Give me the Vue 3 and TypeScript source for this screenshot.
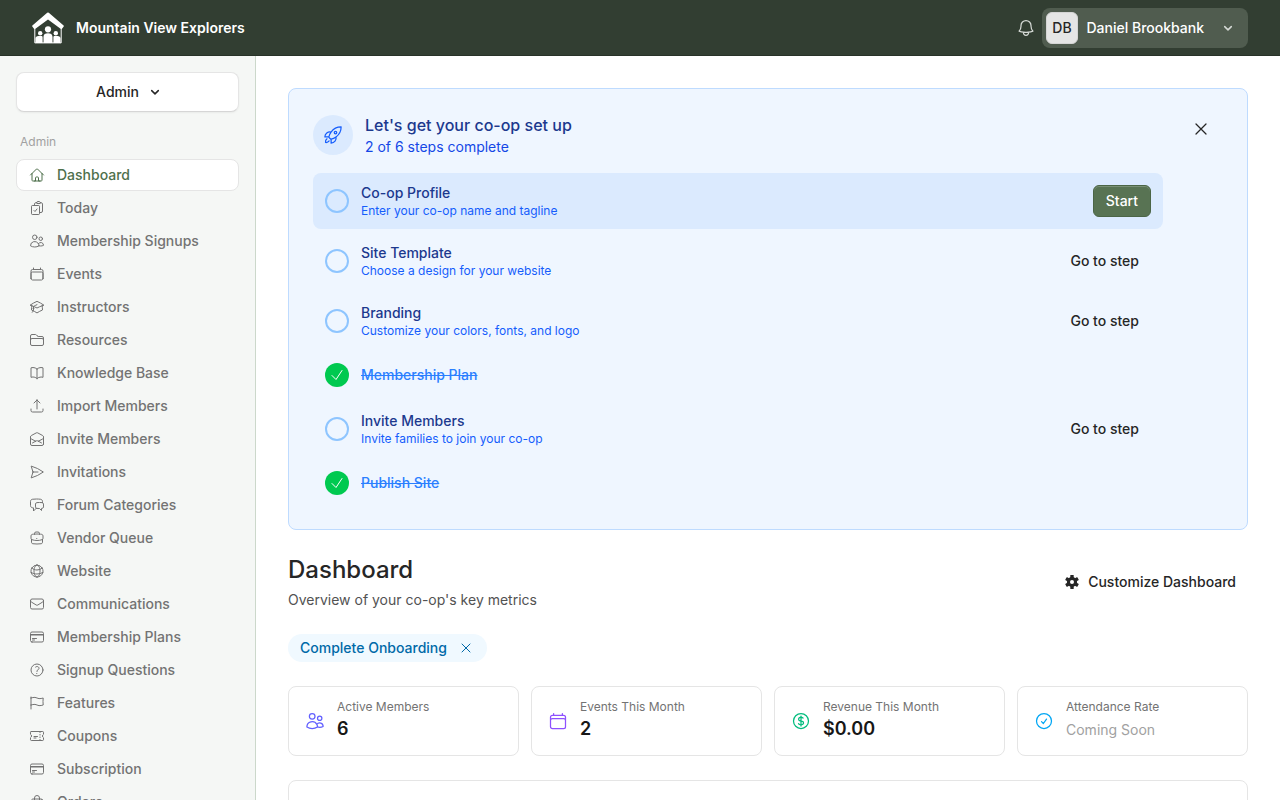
<script setup lang="ts">
import { computed } from 'vue'

interface NavItem {
  label: string
  icon: string
  active?: boolean
}

interface Step {
  title: string
  text?: string
  done?: boolean
  current?: boolean
}

interface Stat {
  label: string
  value: string
  icon: string
  tone: string
  muted?: boolean
}

const icons: Record<string, string> = {
  home: 'm2.25 12 8.954-8.955c.44-.439 1.152-.439 1.591 0L21.75 12M4.5 9.75v10.125c0 .621.504 1.125 1.125 1.125H9.75v-4.875c0-.621.504-1.125 1.125-1.125h2.25c.621 0 1.125.504 1.125 1.125V21h4.125c.621 0 1.125-.504 1.125-1.125V9.75M8.25 21h8.25',
  clipboard:
    'M11.35 3.836c-.065.21-.1.433-.1.664 0 .414.336.75.75.75h4.5a.75.75 0 0 0 .75-.75 2.25 2.25 0 0 0-.1-.664m-5.8 0A2.251 2.251 0 0 1 13.5 2.25H15c1.012 0 1.867.668 2.15 1.586m-5.8 0c-.376.023-.75.05-1.124.08C9.095 4.01 8.25 4.973 8.25 6.108V8.25m8.9-4.414c.376.023.75.05 1.124.08 1.131.094 1.976 1.057 1.976 2.192V16.5A2.25 2.25 0 0 1 18 18.75h-2.25m-7.5-10.5H4.875c-.621 0-1.125.504-1.125 1.125v11.25c0 .621.504 1.125 1.125 1.125h9.75c.621 0 1.125-.504 1.125-1.125V18.75m-7.5-10.5h6.375c.621 0 1.125.504 1.125 1.125v9.375m-8.25-3 1.5 1.5 3-3.75',
  users:
    'M15 19.128a9.38 9.38 0 0 0 2.625.372 9.337 9.337 0 0 0 4.121-.952 4.125 4.125 0 0 0-7.533-2.493M15 19.128v-.003c0-1.113-.285-2.16-.786-3.07M15 19.128v.106A12.318 12.318 0 0 1 8.624 21c-2.331 0-4.512-.645-6.374-1.766l-.001-.109a6.375 6.375 0 0 1 11.964-3.07M12 6.375a3.375 3.375 0 1 1-6.75 0 3.375 3.375 0 0 1 6.75 0Zm8.25 2.25a2.625 2.625 0 1 1-5.25 0 2.625 2.625 0 0 1 5.25 0Z',
  calendar:
    'M6.75 3v2.25M17.25 3v2.25M3 18.75V7.5a2.25 2.25 0 0 1 2.25-2.25h13.5A2.25 2.25 0 0 1 21 7.5v11.25m-18 0A2.25 2.25 0 0 0 5.25 21h13.5A2.25 2.25 0 0 0 21 18.75m-18 0v-7.5A2.25 2.25 0 0 1 5.25 9h13.5A2.25 2.25 0 0 1 21 11.25v7.5',
  cap: 'M4.26 10.147a60.438 60.438 0 0 0-.491 6.347A48.62 48.62 0 0 1 12 20.904a48.62 48.62 0 0 1 8.232-4.41 60.46 60.46 0 0 0-.491-6.347m-15.482 0a50.636 50.636 0 0 0-2.658-.813A59.906 59.906 0 0 1 12 3.493a59.903 59.903 0 0 1 10.399 5.84c-.896.248-1.783.52-2.658.814m-15.482 0A50.717 50.717 0 0 1 12 13.489a50.702 50.702 0 0 1 7.74-3.342M6.75 15a.75.75 0 1 0 0-1.5.75.75 0 0 0 0 1.5Zm0 0v-3.675A55.378 55.378 0 0 1 12 8.443m-7.007 11.55A5.981 5.981 0 0 0 6.75 15.75v-1.5',
  folder:
    'M2.25 12.75V12A2.25 2.25 0 0 1 4.5 9.75h15A2.25 2.25 0 0 1 21.75 12v.75m-8.69-6.44-2.12-2.12a1.5 1.5 0 0 0-1.061-.44H4.5A2.25 2.25 0 0 0 2.25 6v12a2.25 2.25 0 0 0 2.25 2.25h15A2.25 2.25 0 0 0 21.75 18V9a2.25 2.25 0 0 0-2.25-2.25h-5.379a1.5 1.5 0 0 1-1.06-.44Z',
  book: 'M12 6.042A8.967 8.967 0 0 0 6 3.75c-1.052 0-2.062.18-3 .512v14.25A8.987 8.987 0 0 1 6 18c2.305 0 4.408.867 6 2.292m0-14.25a8.966 8.966 0 0 1 6-2.292c1.052 0 2.062.18 3 .512v14.25A8.987 8.987 0 0 0 18 18a8.967 8.967 0 0 0-6 2.292m0-14.25v14.25',
  upload: 'M3 16.5v2.25A2.25 2.25 0 0 0 5.25 21h13.5A2.25 2.25 0 0 0 21 18.75V16.5m-13.5-9L12 3m0 0 4.5 4.5M12 3v13.5',
  mailopen:
    'M21.75 9v.906a2.25 2.25 0 0 1-1.183 1.981l-6.478 3.488M2.25 9v.906a2.25 2.25 0 0 0 1.183 1.981l6.478 3.488m8.839 2.51-4.66-2.51m0 0-1.023-.55a2.25 2.25 0 0 0-2.134 0l-1.022.55m0 0-4.661 2.51m16.5 1.615a2.25 2.25 0 0 1-2.25 2.25h-15a2.25 2.25 0 0 1-2.25-2.25V8.844a2.25 2.25 0 0 1 1.183-1.981l7.5-4.039a2.25 2.25 0 0 1 2.134 0l7.5 4.039a2.25 2.25 0 0 1 1.183 1.98V19.5Z',
  send: 'M6 12 3.269 3.125A59.769 59.769 0 0 1 21.485 12 59.768 59.768 0 0 1 3.27 20.875L5.999 12Zm0 0h7.5',
  chat: 'M20.25 8.511c.884.284 1.5 1.128 1.5 2.097v4.286c0 1.136-.847 2.1-1.98 2.193-.34.027-.68.052-1.02.072v3.091l-3-3c-1.354 0-2.694-.055-4.02-.163a2.115 2.115 0 0 1-.825-.242m9.345-8.334a2.126 2.126 0 0 0-.476-.095 48.64 48.64 0 0 0-8.048 0c-1.131.094-1.976 1.057-1.976 2.192v4.286c0 .837.46 1.58 1.155 1.951m9.345-8.334V6.637c0-1.621-1.152-3.026-2.76-3.235A48.455 48.455 0 0 0 11.25 3c-2.115 0-4.198.137-6.24.402-1.608.209-2.76 1.614-2.76 3.235v6.226c0 1.621 1.152 3.026 2.76 3.235.577.075 1.157.14 1.74.194V21l4.155-4.155',
  briefcase:
    'M20.25 14.15v4.25c0 1.094-.787 2.036-1.872 2.18-2.087.277-4.216.42-6.378.42s-4.291-.143-6.378-.42c-1.085-.144-1.872-1.086-1.872-2.18v-4.25m16.5 0a2.18 2.18 0 0 0 .75-1.661V8.706c0-1.081-.768-2.015-1.837-2.175a48.114 48.114 0 0 0-3.413-.387m4.5 8.006c-.194.165-.42.295-.673.38A23.978 23.978 0 0 1 12 15.75c-2.648 0-5.195-.429-7.577-1.22a2.016 2.016 0 0 1-.673-.38m0 0A2.18 2.18 0 0 1 3 12.489V8.706c0-1.081.768-2.015 1.837-2.175a48.111 48.111 0 0 1 3.413-.387m7.5 0V5.25A2.25 2.25 0 0 0 13.5 3h-3a2.25 2.25 0 0 0-2.25 2.25v.894m7.5 0a48.667 48.667 0 0 0-7.5 0M12 12.75h.008v.008H12v-.008Z',
  globe:
    'M12 21a9.004 9.004 0 0 0 8.716-6.747M12 21a9.004 9.004 0 0 1-8.716-6.747M12 21c2.485 0 4.5-4.03 4.5-9S14.485 3 12 3m0 18c-2.485 0-4.5-4.03-4.5-9S9.515 3 12 3m0 0a8.997 8.997 0 0 1 7.843 4.582M12 3a8.997 8.997 0 0 0-7.843 4.582m15.686 0A11.953 11.953 0 0 1 12 10.5c-2.998 0-5.74-1.1-7.843-2.918m15.686 0A8.959 8.959 0 0 1 21 12c0 .778-.099 1.533-.284 2.253m0 0A17.919 17.919 0 0 1 12 16.5c-3.162 0-6.133-.815-8.716-2.247m0 0A9.015 9.015 0 0 1 3 12c0-1.605.42-3.113 1.157-4.418',
  mail: 'M21.75 6.75v10.5a2.25 2.25 0 0 1-2.25 2.25h-15a2.25 2.25 0 0 1-2.25-2.25V6.75m19.5 0A2.25 2.25 0 0 0 19.5 4.5h-15a2.25 2.25 0 0 0-2.25 2.25m19.5 0v.243a2.25 2.25 0 0 1-1.07 1.916l-7.5 4.615a2.25 2.25 0 0 1-2.36 0L3.32 8.91a2.25 2.25 0 0 1-1.07-1.916V6.75',
  card: 'M2.25 8.25h19.5M2.25 9h19.5m-16.5 5.25h6m-6 2.25h3m-3.75 3h15a2.25 2.25 0 0 0 2.25-2.25V6.75A2.25 2.25 0 0 0 19.5 4.5h-15a2.25 2.25 0 0 0-2.25 2.25v10.5A2.25 2.25 0 0 0 4.5 19.5Z',
  question:
    'M9.879 7.519c1.171-1.025 3.071-1.025 4.242 0 1.172 1.025 1.172 2.687 0 3.712-.203.179-.43.326-.67.442-.745.361-1.45.999-1.45 1.827v.75M21 12a9 9 0 1 1-18 0 9 9 0 0 1 18 0Zm-9 5.25h.008v.008H12v-.008Z',
  flag: 'M3 3v1.5M3 21v-6m0 0 2.77-.693a9 9 0 0 1 6.208.682l.108.054a9 9 0 0 0 6.086.71l3.114-.732a48.524 48.524 0 0 1-.005-10.499l-3.11.732a9 9 0 0 1-6.085-.711l-.108-.054a9 9 0 0 0-6.208-.682L3 4.5M3 15V4.5',
  ticket:
    'M16.5 6v.75m0 3v.75m0 3v.75m0 3V18m-9-5.25h5.25M7.5 15h3M3.375 5.25c-.621 0-1.125.504-1.125 1.125v3.026a2.999 2.999 0 0 1 0 5.198v3.026c0 .621.504 1.125 1.125 1.125h17.25c.621 0 1.125-.504 1.125-1.125v-3.026a2.999 2.999 0 0 1 0-5.198V6.375c0-.621-.504-1.125-1.125-1.125H3.375Z',
  bag: 'M15.75 10.5V6a3.75 3.75 0 1 0-7.5 0v4.5m11.356-1.993 1.263 12c.07.665-.45 1.243-1.119 1.243H4.25a1.125 1.125 0 0 1-1.12-1.243l1.264-12A1.125 1.125 0 0 1 5.513 7.5h12.974c.576 0 1.059.435 1.119 1.007Z',
  bell: 'M14.857 17.082a23.848 23.848 0 0 0 5.454-1.31A8.967 8.967 0 0 1 18 9.75V9A6 6 0 0 0 6 9v.75a8.967 8.967 0 0 1-2.312 6.022c1.733.64 3.56 1.085 5.455 1.31m5.714 0a24.255 24.255 0 0 1-5.714 0m5.714 0a3 3 0 1 1-5.714 0',
  rocket:
    'M15.59 14.37a6 6 0 0 1-5.84 7.38v-4.8m5.84-2.58a14.98 14.98 0 0 0 6.16-12.12A14.98 14.98 0 0 0 9.631 8.41m5.96 5.96a14.926 14.926 0 0 1-5.841 2.58m-.119-8.54a6 6 0 0 0-7.381 5.84h4.8m2.581-5.84a14.927 14.927 0 0 0-2.58 5.84m2.699 2.7c-.103.021-.207.041-.311.06a15.09 15.09 0 0 1-2.448-2.448 14.9 14.9 0 0 1 .06-.312m-2.24 2.39a4.493 4.493 0 0 0-1.757 4.306 4.493 4.493 0 0 0 4.306-1.758M16.5 9a1.5 1.5 0 1 1-3 0 1.5 1.5 0 0 1 3 0Z',
  dollar:
    'M12 6v12m-3-2.818.879.659c1.171.879 3.07.879 4.242 0 1.172-.879 1.172-2.303 0-3.182C13.536 12.219 12.768 12 12 12c-.725 0-1.45-.22-2.003-.659-1.106-.879-1.106-2.303 0-3.182s2.9-.879 4.006 0l.415.33M21 12a9 9 0 1 1-18 0 9 9 0 0 1 18 0Z',
  checkCircle: 'M9 12.75 11.25 15 15 9.75M21 12a9 9 0 1 1-18 0 9 9 0 0 1 18 0Z',
  check: 'm4.5 12.75 6 6 9-13.5',
  close: 'M6 18 18 6M6 6l12 12',
}

const nav: NavItem[] = [
  { label: 'Dashboard', icon: 'home', active: true },
  { label: 'Today', icon: 'clipboard' },
  { label: 'Membership Signups', icon: 'users' },
  { label: 'Events', icon: 'calendar' },
  { label: 'Instructors', icon: 'cap' },
  { label: 'Resources', icon: 'folder' },
  { label: 'Knowledge Base', icon: 'book' },
  { label: 'Import Members', icon: 'upload' },
  { label: 'Invite Members', icon: 'mailopen' },
  { label: 'Invitations', icon: 'send' },
  { label: 'Forum Categories', icon: 'chat' },
  { label: 'Vendor Queue', icon: 'briefcase' },
  { label: 'Website', icon: 'globe' },
  { label: 'Communications', icon: 'mail' },
  { label: 'Membership Plans', icon: 'card' },
  { label: 'Signup Questions', icon: 'question' },
  { label: 'Features', icon: 'flag' },
  { label: 'Coupons', icon: 'ticket' },
  { label: 'Subscription', icon: 'card' },
  { label: 'Orders', icon: 'bag' },
]

const steps: Step[] = [
  { title: 'Co-op Profile', text: 'Enter your co-op name and tagline', current: true },
  { title: 'Site Template', text: 'Choose a design for your website' },
  { title: 'Branding', text: 'Customize your colors, fonts, and logo' },
  { title: 'Membership Plan', done: true },
  { title: 'Invite Members', text: 'Invite families to join your co-op' },
  { title: 'Publish Site', done: true },
]

const doneCount = computed(() => steps.filter((s) => s.done).length)

const stats: Stat[] = [
  { label: 'Active Members', value: '6', icon: 'users', tone: 'indigo' },
  { label: 'Events This Month', value: '2', icon: 'calendar', tone: 'violet' },
  { label: 'Revenue This Month', value: '$0.00', icon: 'dollar', tone: 'emerald' },
  { label: 'Attendance Rate', value: 'Coming Soon', icon: 'checkCircle', tone: 'sky', muted: true },
]
</script>

<template>
  <div class="app">
    <header class="topbar">
      <div class="brand">
        <svg class="logo" viewBox="0 0 32 32">
          <path class="solid" d="M15.200.8a1.200 1.200 0 0 1 1.600 0L31.600 13.400c.4.300.4.700.1 1.100l-1.700 2.300c-.3.400-.7.400-1.100.1L16 7.400 3.100 16.900c-.4.300-.8.300-1.100-.1L.3 14.500c-.3-.4-.3-.8.1-1.100Z" />
          <path class="wall" d="M2.800 16.500V30.900H29.200V16.500" />
          <circle class="solid" cx="16" cy="17.300" r="3.100" />
          <circle class="solid" cx="8.200" cy="21.200" r="2.200" />
          <circle class="solid" cx="23.800" cy="21.200" r="2.200" />
          <path class="solid" d="M11.500 31v-6.300c0-2.400 1.800-3.500 4.500-3.500s4.500 1.100 4.500 3.500V31ZM3.400 31v-4.500c0-1.600 1.300-2.500 3-2.500h3c.7 0 1.200.4 1.200 1.200V31ZM28.600 31v-4.500c0-1.600-1.300-2.500-3-2.500h-3c-.7 0-1.200.4-1.200 1.200V31Z" />
        </svg>
        <span>Mountain View Explorers</span>
      </div>
      <div class="account">
        <svg class="icon bell" viewBox="0 0 24 24"><path :d="icons.bell" /></svg>
        <button class="profile">
          <span class="avatar">DB</span>
          <span class="who">Daniel Brookbank</span>
          <svg class="chevron" viewBox="0 0 16 16"><path d="M4.700 6.600 8 9.900l3.300-3.300" /></svg>
        </button>
      </div>
    </header>

    <div class="body">
      <aside class="sidebar">
        <button class="switcher">
          Admin
          <svg class="chevron" viewBox="0 0 16 16"><path d="M4.700 6.600 8 9.900l3.300-3.300" /></svg>
        </button>
        <div class="group">Admin</div>
        <nav class="nav">
          <a v-for="item in nav" :key="item.label" class="nav-item" :class="{ active: item.active }">
            <svg class="icon small" viewBox="0 0 24 24"><path :d="icons[item.icon]" /></svg>
            <span>{{ item.label }}</span>
          </a>
        </nav>
      </aside>

      <main class="main">
        <section class="setup">
          <div class="setup-body">
            <div class="setup-head">
              <span class="rocket"><svg class="icon" viewBox="0 0 24 24"><path :d="icons.rocket" /></svg></span>
              <div>
                <h2>Let's get your co-op set up</h2>
                <p>{{ doneCount }} of {{ steps.length }} steps complete</p>
              </div>
            </div>
            <ul class="steps">
              <li v-for="step in steps" :key="step.title" class="step" :class="{ current: step.current, done: step.done }">
                <span class="mark">
                  <svg v-if="step.done" class="icon small" viewBox="0 0 24 24"><path :d="icons.check" /></svg>
                </span>
                <div class="step-text">
                  <div class="step-title"><span>{{ step.title }}</span></div>
                  <div v-if="step.text" class="step-desc">{{ step.text }}</div>
                </div>
                <button v-if="step.current" class="btn primary">Start</button>
                <button v-else-if="!step.done" class="btn ghost">Go to step</button>
              </li>
            </ul>
          </div>
          <button class="close" aria-label="Close">
            <svg class="icon" viewBox="0 0 24 24"><path :d="icons.close" /></svg>
          </button>
        </section>

        <div class="page-head">
          <div>
            <h1>Dashboard</h1>
            <p>Overview of your co-op's key metrics</p>
          </div>
          <button class="customize">
            <svg class="gear" viewBox="0 0 16 16">
              <circle cx="8" cy="8" r="5.100" />
              <rect x="6.300" y="1" width="3.400" height="14" rx=".6" />
              <rect x="6.300" y="1" width="3.400" height="14" rx=".6" transform="rotate(60 8 8)" />
              <rect x="6.300" y="1" width="3.400" height="14" rx=".6" transform="rotate(120 8 8)" />
              <circle class="hole" cx="8" cy="8" r="2" />
            </svg>
            Customize Dashboard
          </button>
        </div>

        <div class="chip">
          Complete Onboarding
          <svg class="icon small" viewBox="0 0 24 24"><path :d="icons.close" /></svg>
        </div>

        <div class="stats">
          <div v-for="stat in stats" :key="stat.label" class="stat">
            <svg class="icon" :class="stat.tone" viewBox="0 0 24 24"><path :d="icons[stat.icon]" /></svg>
            <div>
              <div class="stat-label">{{ stat.label }}</div>
              <div class="stat-value" :class="{ muted: stat.muted }">{{ stat.value }}</div>
            </div>
          </div>
        </div>

        <section class="panel"></section>
      </main>
    </div>
  </div>
</template>

<style>
body {
  margin: 0;
  overflow: hidden;
}
</style>

<style scoped>
.app {
  height: 800px;
  display: flex;
  flex-direction: column;
  overflow: hidden;
  background: #fff;
  color: #262626;
  font-family: Inter, sans-serif;
  font-size: 14px;
  line-height: 20px;
}
.app * {
  box-sizing: border-box;
}
button {
  font: inherit;
  font-weight: 500;
  color: inherit;
  border: 0;
  background: none;
  padding: 0;
  margin: 0;
}
h1,
h2,
p,
ul {
  margin: 0;
  padding: 0;
  font-weight: 400;
  list-style: none;
}
svg {
  display: block;
  flex: none;
}
.icon {
  width: 20px;
  height: 20px;
  fill: none;
  stroke: currentColor;
  stroke-width: 1.5;
  stroke-linecap: round;
  stroke-linejoin: round;
}
.icon.small {
  width: 16px;
  height: 16px;
}
.chevron {
  width: 16px;
  height: 16px;
  fill: none;
  stroke: currentColor;
  stroke-width: 1.5;
  stroke-linecap: round;
  stroke-linejoin: round;
}

.topbar {
  flex: none;
  height: 56px;
  padding: 0 32px;
  display: flex;
  align-items: center;
  justify-content: space-between;
  background: #323e32;
  border-bottom: 1px solid #283228;
  color: #fff;
}
.brand {
  display: flex;
  align-items: center;
  gap: 12px;
  font-weight: 600;
}
.logo {
  width: 32px;
  height: 32px;
}
.solid {
  fill: #fff;
}
.wall {
  fill: none;
  stroke: #fff;
  stroke-width: 1;
}
.account {
  display: flex;
  align-items: center;
  gap: 6px;
}
.bell {
  color: #d5d9d5;
}
.profile {
  width: 206px;
  height: 40px;
  padding: 4px;
  display: flex;
  align-items: center;
  border-radius: 8px;
  background: #505c4f;
}
.avatar {
  width: 32px;
  height: 32px;
  border-radius: 6px;
  background: #e5e5e5;
  border: 1px solid #d5d5d5;
  color: #262626;
  line-height: 30px;
  text-align: center;
}
.who {
  flex: 1;
  padding-left: 8.5px;
  text-align: left;
  font-weight: 500;
}
.profile .chevron {
  margin-right: 8px;
  color: #d5d9d5;
}

.body {
  flex: 1;
  min-height: 0;
  display: flex;
}
.sidebar {
  width: 256px;
  flex: none;
  padding: 16px;
  background: #f5f7f5;
  border-right: 1px solid #ccd8cb;
  overflow: hidden;
}
.switcher {
  width: 100%;
  height: 40px;
  padding-left: 4px;
  display: flex;
  align-items: center;
  justify-content: center;
  gap: 8px;
  background: #fff;
  border: 1px solid #e5e5e5;
  border-bottom-color: #d6d6d6;
  border-radius: 8px;
  box-shadow: 0 1px 2px rgba(0, 0, 0, 0.05);
}
.group {
  padding: 20px 4px 7px;
  color: #a1a1a1;
  font-size: 12px;
}
.nav {
  display: flex;
  flex-direction: column;
  gap: 1px;
}
.nav-item {
  height: 32px;
  flex: none;
  padding: 0 12px;
  display: flex;
  align-items: center;
  gap: 12px;
  border: 1px solid transparent;
  border-radius: 8px;
  color: #737373;
  font-weight: 500;
}
.nav-item.active {
  background: #fff;
  border-color: #e5e5e5;
  color: #4f704c;
}

.main {
  flex: 1;
  min-width: 0;
  padding: 32px 32px 0;
  overflow: hidden;
}
.setup {
  display: flex;
  gap: 16px;
  align-items: flex-start;
  padding: 24px;
  background: #eff6ff;
  border: 1px solid #bedbff;
  border-radius: 8px;
}
.setup-body {
  flex: 1;
}
.setup-head {
  height: 44px;
  display: flex;
  align-items: center;
  gap: 12px;
}
.setup-head h2 {
  font-size: 16px;
  line-height: 24px;
  font-weight: 500;
  color: #1c398e;
}
.setup-head p {
  color: #1447e6;
}
.rocket {
  width: 40px;
  height: 40px;
  display: grid;
  place-items: center;
  border-radius: 50%;
  background: #dbeafe;
  color: #155dfc;
}
.steps {
  margin-top: 16px;
  display: flex;
  flex-direction: column;
  gap: 4px;
}
.step {
  min-height: 44px;
  padding: 10px 12px;
  display: flex;
  align-items: center;
  gap: 12px;
  border-radius: 8px;
}
.step.current {
  background: #dbeafe;
}
.mark {
  width: 24px;
  height: 24px;
  flex: none;
  display: grid;
  place-items: center;
  border: 2px solid #8ec5ff;
  border-radius: 50%;
}
.done .mark {
  border: 0;
  background: #00c950;
  color: #fff;
}
.step-text {
  flex: 1;
}
.step-title {
  font-weight: 500;
  color: #1c398e;
}
.done .step-title {
  color: #2b7fff;
  text-decoration: line-through;
}
.step-desc {
  font-size: 12px;
  line-height: 16px;
  color: #155dfc;
}
.btn {
  height: 32px;
  padding: 0 12px;
  border-radius: 6px;
}
.btn.primary {
  color: #fff;
  background: #587353;
  border: 1px solid #4b6546;
  box-shadow: inset 0 1px rgba(255, 255, 255, 0.2);
}
.close {
  width: 44px;
  height: 32px;
  display: grid;
  place-items: center;
}

.page-head {
  margin-top: 24px;
  height: 56px;
  display: flex;
  align-items: center;
  justify-content: space-between;
}
.page-head h1 {
  font-size: 24px;
  line-height: 32px;
  font-weight: 500;
}
.page-head p {
  margin-top: 4px;
  color: #525252;
}
.customize {
  height: 40px;
  padding: 0 12px;
  display: flex;
  align-items: center;
  gap: 8px;
}
.gear {
  width: 16px;
  height: 16px;
  fill: #262626;
}
.gear .hole {
  fill: #fff;
}
.chip {
  width: fit-content;
  height: 28px;
  margin-top: 24px;
  padding: 0 13px 0 12px;
  display: flex;
  align-items: center;
  gap: 11px;
  border-radius: 14px;
  background: #f0f9ff;
  color: #0069a8;
  font-weight: 500;
}
.stats {
  margin-top: 24px;
  display: grid;
  grid-template-columns: repeat(4, 1fr);
  gap: 12px;
}
.stat {
  height: 70px;
  padding: 12px 16px;
  display: flex;
  align-items: center;
  gap: 12px;
  border: 1px solid #e5e5e5;
  border-radius: 8px;
}
.stat-label {
  font-size: 12px;
  line-height: 16px;
  color: #737373;
}
.stat-value {
  height: 28px;
  font-size: 18px;
  line-height: 28px;
  font-weight: 600;
  color: #171717;
}
.stat-value.muted {
  font-size: 14px;
  line-height: 30px;
  font-weight: 400;
  color: #a1a1a1;
}
.indigo {
  color: #615fff;
}
.violet {
  color: #8e51ff;
}
.emerald {
  color: #00bc7d;
}
.sky {
  color: #00a6f4;
}
.panel {
  margin-top: 24px;
  height: 200px;
  border: 1px solid #e5e5e5;
  border-radius: 8px;
}
</style>
